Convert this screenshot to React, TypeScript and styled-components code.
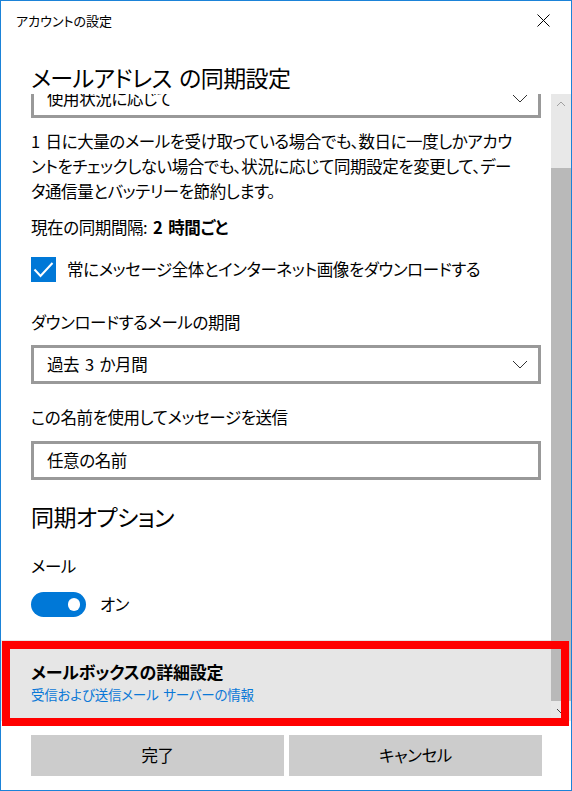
import React from "react";
import styled, { createGlobalStyle } from "styled-components";

const GlobalStyle = createGlobalStyle`
  html, body { margin: 0; padding: 0; background: #fff; }
  body {
    font-family: "Noto Sans CJK JP", "Noto Sans", sans-serif;
    font-feature-settings: "palt" 1;
    color: #000;
  }
  * { box-sizing: border-box; }
`;

const Window = styled.div`
  position: relative;
  width: 572px;
  height: 791px;
  border: 1px solid #1b83d8;
  background: #fff;
  display: flex;
  flex-direction: column;
  overflow: hidden;
`;

const TitleBar = styled.div`
  height: 39px;
  flex: none;
  display: flex;
  align-items: center;
  justify-content: space-between;
  padding-left: 15px;
`;

const TitleText = styled.span`
  font-size: 13px;
  line-height: 20px;
`;

const CloseButton = styled.div`
  width: 56px;
  height: 39px;
  display: flex;
  align-items: center;
  justify-content: center;
`;

const Header = styled.div`
  height: 54px;
  flex: none;
  padding: 21px 0 0 30px;
  background: #fff;
`;

const PageTitle = styled.h1`
  margin: 0;
  font-size: 23px;
  letter-spacing: -0.6px;
  word-spacing: 3px;
  font-weight: 400;
  line-height: 33px;
  white-space: nowrap;
`;

const Body = styled.div`
  flex: 1;
  min-height: 0;
  display: flex;
`;

const Viewport = styled.div`
  flex: 1;
  overflow: hidden;
`;

const Content = styled.div`
  margin-top: -15px;
  display: flex;
  flex-direction: column;
`;

const Section = styled.div`
  padding: 0 10px 0 30px;
  display: flex;
  flex-direction: column;
  font-size: 16.5px;
  letter-spacing: -0.4px;
  word-spacing: 2.5px;
  line-height: 25px;
`;

const Text = styled.div<{ $mt?: number }>`
  margin-top: ${(p) => p.$mt ?? 0}px;
  white-space: nowrap;
`;

const Line = styled.span`
  display: block;
`;

const Strong = styled.b`
  font-weight: 700;
`;

const Box = styled.div<{ $mt?: number }>`
  margin-top: ${(p) => p.$mt ?? 0}px;
  height: 39px;
  border: 3px solid #999999;
  display: flex;
  align-items: center;
  justify-content: space-between;
  padding: 0 10px 0 13px;
  white-space: nowrap;
  background: #fff;
`;

const CheckRow = styled.div<{ $mt?: number }>`
  margin-top: ${(p) => p.$mt ?? 0}px;
  display: flex;
  align-items: center;
  gap: 11px;
  white-space: nowrap;
`;

const CheckBox = styled.div`
  width: 25px;
  height: 25px;
  flex: none;
  background: #0078d7;
  display: flex;
  align-items: center;
  justify-content: center;
`;

const SectionTitle = styled.h2<{ $mt?: number }>`
  margin: ${(p) => p.$mt ?? 0}px 0 0;
  font-size: 23px;
  letter-spacing: -0.6px;
  font-weight: 400;
  line-height: 33px;
`;

const ToggleRow = styled.div<{ $mt?: number }>`
  margin-top: ${(p) => p.$mt ?? 0}px;
  display: flex;
  align-items: center;
  gap: 14px;
`;

const Toggle = styled.div`
  width: 55px;
  height: 25px;
  border-radius: 12.5px;
  background: #0078d7;
  display: flex;
  align-items: center;
  justify-content: flex-end;
  padding-right: 6px;
`;

const Knob = styled.div`
  width: 12.5px;
  height: 12.5px;
  border-radius: 50%;
  background: #fff;
`;

const LinkItem = styled.div<{ $mt?: number }>`
  margin-top: ${(p) => p.$mt ?? 0}px;
  background: #e6e6e6;
  padding: 19px 30px 24px;
  display: flex;
  flex-direction: column;
  white-space: nowrap;
`;

const ItemTitle = styled.div`
  font-size: 17px;
  letter-spacing: -0.2px;
  font-weight: 700;
  line-height: 25px;
`;

const ItemLink = styled.div`
  font-size: 13.5px;
  letter-spacing: -0.2px;
  word-spacing: 2px;
  line-height: 20px;
  color: #0a78d7;
`;

const ScrollBar = styled.div`
  width: 20px;
  flex: none;
  background: #e8e8e8;
  display: flex;
  flex-direction: column;
`;

const ScrollArrow = styled.div<{ $color: string }>`
  height: 20px;
  flex: none;
  display: flex;
  align-items: center;
  justify-content: center;
  color: ${(p) => p.$color};
`;

const ScrollTrack = styled.div`
  flex: 1;
  display: flex;
  flex-direction: column;
  padding-top: 54px;
`;

const ScrollThumb = styled.div`
  flex: 1;
  background: #b9b9b9;
`;

const Footer = styled.div`
  flex: none;
  height: 69px;
  padding: 14px 29px 14px 30px;
  display: grid;
  grid-template-columns: 1fr 1fr;
  gap: 5px;
`;

const Button = styled.div`
  height: 41px;
  background: #cccccc;
  display: flex;
  align-items: center;
  justify-content: center;
  font-size: 16.5px;
  letter-spacing: -0.4px;
  line-height: 25px;
`;

const Highlight = styled.div`
  position: absolute;
  left: 1px;
  top: 640px;
  width: 567px;
  height: 85px;
  border: 8px solid #ff0000;
  pointer-events: none;
`;

const Chevron = () => (
  <svg width="16" height="9" viewBox="0 0 16 9" fill="none">
    <path d="M1 1 L8 8 L15 1" stroke="#333" strokeWidth="1" />
  </svg>
);

const SmallChevron = ({ up }: { up?: boolean }) => (
  <svg width="10" height="6" viewBox="0 0 10 6" fill="none">
    <path d={up ? "M1 5 L5 1 L9 5" : "M1 1 L5 5 L9 1"} stroke="currentColor" strokeWidth="1" />
  </svg>
);

export default function App() {
  return (
    <>
      <GlobalStyle />
      <Window>
        <TitleBar>
          <TitleText>アカウントの設定</TitleText>
          <CloseButton>
            <svg width="13" height="13" viewBox="0 0 13 13" fill="none">
              <path d="M0.5 0.5 L12.5 12.5 M12.5 0.5 L0.5 12.5" stroke="#000" strokeWidth="1" />
            </svg>
          </CloseButton>
        </TitleBar>
        <Header>
          <PageTitle>メールアドレス の同期設定</PageTitle>
        </Header>
        <Body>
          <Viewport>
            <Content>
              <Section>
                <Box>
                  <span>使用状況に応じて</span>
                  <Chevron />
                </Box>
                <Text $mt={11}>
                  <Line>1 日に大量のメールを受け取っている場合でも、数日に一度しかアカウ</Line>
                  <Line>ントをチェックしない場合でも、状況に応じて同期設定を変更して、デー</Line>
                  <Line>タ通信量とバッテリーを節約します。</Line>
                </Text>
                <Text $mt={11}>
                  現在の同期間隔: <Strong>2 時間ごと</Strong>
                </Text>
                <CheckRow $mt={17}>
                  <CheckBox>
                    <svg width="25" height="25" viewBox="0 0 25 25" fill="none">
                      <path d="M3.5 12.5 L9.5 19 L21.5 6" stroke="#fff" strokeWidth="2" />
                    </svg>
                  </CheckBox>
                  <span>常にメッセージ全体とインターネット画像をダウンロードする</span>
                </CheckRow>
                <Text $mt={28}>ダウンロードするメールの期間</Text>
                <Box $mt={10}>
                  <span>過去 3 か月間</span>
                  <Chevron />
                </Box>
                <Text $mt={21}>この名前を使用してメッセージを送信</Text>
                <Box $mt={11}>
                  <span>任意の名前</span>
                </Box>
                <SectionTitle $mt={20}>同期オプション</SectionTitle>
                <Text $mt={21}>メール</Text>
                <ToggleRow $mt={13}>
                  <Toggle>
                    <Knob />
                  </Toggle>
                  <span>オン</span>
                </ToggleRow>
              </Section>
              <LinkItem $mt={23}>
                <ItemTitle>メールボックスの詳細設定</ItemTitle>
                <ItemLink>受信および送信メール サーバーの情報</ItemLink>
              </LinkItem>
            </Content>
          </Viewport>
          <ScrollBar>
            <ScrollArrow $color="#a0a0a0">
              <SmallChevron up />
            </ScrollArrow>
            <ScrollTrack>
              <ScrollThumb />
            </ScrollTrack>
            <ScrollArrow $color="#404040">
              <SmallChevron />
            </ScrollArrow>
          </ScrollBar>
        </Body>
        <Footer>
          <Button>完了</Button>
          <Button>キャンセル</Button>
        </Footer>
        <Highlight />
      </Window>
    </>
  );
}
